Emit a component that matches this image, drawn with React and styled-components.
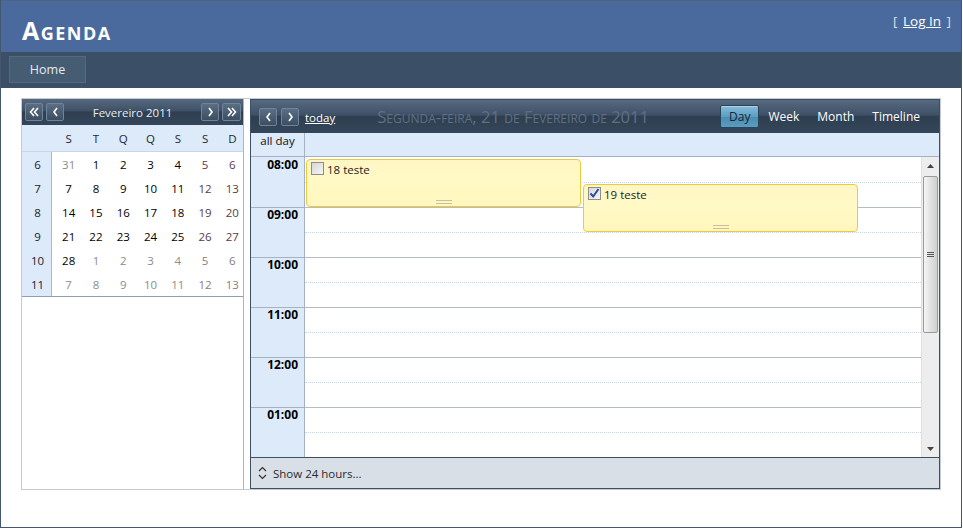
import React from "react";
import styled, { createGlobalStyle } from "styled-components";

const Global = createGlobalStyle`
  html, body { margin: 0; padding: 0; background: #fff; }
  body { font-family: "Open Sans", "Noto Sans", sans-serif; font-size: 11.5px; color: #1b1b1b; }
  * { box-sizing: border-box; }
`;

const Page = styled.div`
  width: 962px;
  height: 528px;
  border: 1px solid #42576e;
  border-top: none;
  display: flex;
  flex-direction: column;
  background: #fff;
`;

const Header = styled.header`
  height: 52px;
  background: #4a6a9d;
  border-top: 1px solid #4f6582;
  display: flex;
  justify-content: space-between;
  align-items: flex-start;
  padding: 0 10px 0 21px;
`;

const Title = styled.h1`
  margin: 14px 0 0;
  font-family: "Open Sans", sans-serif;
  font-weight: 700;
  font-size: 25px;
  letter-spacing: 1.5px;
  font-variant: small-caps;
  color: #fff;
  line-height: 30px;
`;

const Login = styled.div`
  margin-top: 11px;
  color: #d8e0ec;
  font-size: 13.5px;
  line-height: 18px;
  a { color: #fff; text-decoration: underline; margin: 0 2px; }
`;

const Nav = styled.nav`
  height: 36px;
  background: #3b5066;
  display: flex;
  align-items: flex-start;
  padding: 4px 0 0 8px;
`;

const Tab = styled.div`
  width: 77px;
  height: 27px;
  background: #465c72;
  border: 1px solid #53697f;
  color: #e4eaf0;
  font-size: 12.5px;
  display: flex;
  align-items: center;
  justify-content: center;
`;

const Main = styled.main`
  padding: 10px 0 0 20px;
`;

const Container = styled.div`
  width: 920px;
  height: 392px;
  border: 1px solid #c3cad5;
  display: flex;
  gap: 6px;
`;

const LeftPane = styled.div`
  width: 222px;
  border-right: 1px solid #a9b6c6;
`;

const darkGrad = `linear-gradient(#56697f 0%, #3f5166 45%, #2f3f51 50%, #34465a 100%)`;

const MiniCal = styled.div`
  border-bottom: 1px solid #8e9fb3;
`;

const MiniHead = styled.div`
  height: 26px;
  background: ${darkGrad};
  display: flex;
  align-items: center;
  padding: 0 2px 0 3px;
  gap: 3px;
`;

const NavBtn = styled.button`
  width: ${(p) => p.$w || 18}px;
  height: 18px;
  padding: 0;
  border: 1px solid #6f8399;
  border-radius: 2px;
  background: linear-gradient(#5a6e84, #3c4e62);
  display: flex;
  align-items: center;
  justify-content: center;
  cursor: pointer;
`;

const MiniTitle = styled.div`
  flex: 1;
  text-align: center;
  color: #e6edf4;
  font-size: 11.5px;
`;

const CalGrid = styled.div`
  display: grid;
  grid-template-columns: 30px repeat(7, 1fr);
`;

const DayName = styled.div`
  height: 27px;
  background: #dceaf9;
  border-bottom: 1px solid #c9d6e4;
  display: flex;
  align-items: center;
  justify-content: center;
  padding-left: ${(p) => (p.$corner ? 0 : 6)}px;
  font-size: 11.5px;
  color: #1e2630;
`;

const WeekNum = styled.div`
  height: 24px;
  background: #dceaf9;
  border-right: 1px solid #a9b8c9;
  display: flex;
  align-items: center;
  justify-content: center;
  padding-left: 2px;
  font-size: 11.5px;
  color: #1a2230;
`;

const DayCell = styled.div`
  height: 24px;
  display: flex;
  align-items: center;
  justify-content: center;
  padding-left: 6px;
  font-size: 11.5px;
  color: ${(p) => (p.$other ? (p.$weekend ? "#8b7a86" : "#8c8c8c") : p.$weekend ? "#5a3a4a" : "#000")};
`;

const Scheduler = styled.div`
  width: 690px;
  height: 390px;
  border: 1px solid #3d4f63;
  display: flex;
  flex-direction: column;
`;

const Toolbar = styled.div`
  height: 33px;
  background: ${darkGrad};
  display: flex;
  align-items: center;
  padding: 0 10px 0 8px;
`;

const SmallNav = styled(NavBtn)`
  margin-right: 4px;
`;

const Today = styled.a`
  color: #fff;
  text-decoration: underline;
  font-size: 11.5px;
  margin-left: 2px;
  margin-top: 1px;
`;

const DateTitle = styled.div`
  margin-left: 42px;
  font-size: 16.6px;
  font-variant: small-caps;
  color: #5f7083;
  flex: 1;
`;

const ViewBtn = styled.div`
  height: 23px;
  padding: 0 8px;
  display: flex;
  align-items: center;
  font-size: 12px;
  color: ${(p) => (p.$active ? "#142434" : "#fff")};
  border-radius: 2px;
  border: 1px solid ${(p) => (p.$active ? "#27455a" : "transparent")};
  background: ${(p) => (p.$active ? "linear-gradient(#86bcd8, #5d9ec2 50%, #4a8db3 51%, #5b9cc0)" : "transparent")};
  box-shadow: ${(p) => (p.$active ? "inset 0 1px 0 rgba(255,255,255,0.35)" : "none")};
`;

const AllDayRow = styled.div`
  height: 24px;
  background: #dceaf9;
  border-bottom: 1px solid #a3b1c1;
  display: flex;
`;

const AllDayLabel = styled.div`
  width: 54px;
  border-right: 1px solid #a3b3c4;
  text-align: center;
  font-size: 11.5px;
  line-height: 14px;
  padding-top: 1px;
  color: #111;
`;

const Body = styled.div`
  height: 300px;
  display: flex;
`;

const TimeCol = styled.div`
  width: 54px;
  background: #dceaf9;
  border-right: 1px solid #a3b3c4;
`;

const TimeCell = styled.div`
  height: 50px;
  border-top: ${(p) => (p.$first ? "none" : "1px solid #a7b2c0")};
  text-align: right;
  padding: ${(p) => (p.$first ? "1px" : "0")} 6px 0 0;
  font-weight: 700;
  font-size: 12px;
  line-height: 14px;
  color: #000;
`;

const Slots = styled.div`
  flex: 1;
  position: relative;
`;

const HourSlot = styled.div`
  height: 50px;
  border-top: ${(p) => (p.$first ? "1px solid transparent" : "1px solid #b4bcc7")};
  position: relative;
  &::after {
    content: "";
    position: absolute;
    left: 0;
    right: 0;
    top: 24px;
    border-top: 1px dotted #c6d6e8;
  }
`;

const Event = styled.div`
  position: absolute;
  width: 275px;
  height: 48px;
  border: 1px solid #eec93e;
  border-radius: 4px;
  background: linear-gradient(#fff6c4, #fff9c6 40%, #fff7bd);
  padding: 2px 4px;
  display: flex;
  align-items: flex-start;
  gap: 3px;
  font-size: 11.5px;
  color: #1c1c1c;
  line-height: 15px;
`;

const Check = styled.span`
  width: 13px;
  height: 13px;
  border: 1px solid #8d8d8d;
  background: linear-gradient(135deg, #d8d8d8, #f4f4f4);
  display: inline-flex;
  align-items: center;
  justify-content: center;
  flex: none;
`;

const Grip = styled.div`
  position: absolute;
  left: 50%;
  bottom: 2px;
  width: 16px;
  margin-left: -8px;
  height: 4px;
  border-top: 1px solid #c8c0a0;
  border-bottom: 1px solid #c8c0a0;
`;

const ScrollBar = styled.div`
  width: 18px;
  background: #ededed;
  border-left: 1px solid #e0e0e0;
  display: flex;
  flex-direction: column;
  align-items: center;
`;

const Arrow = styled.div`
  height: 17px;
  width: 100%;
  display: flex;
  align-items: center;
  justify-content: center;
`;

const Track = styled.div`
  flex: 1;
`;

const Thumb = styled.div`
  width: 15px;
  height: 157px;
  margin-top: 2px;
  border: 1px solid #9a9a9a;
  border-radius: 2px;
  background: linear-gradient(90deg, #f4f4f4, #dedede 60%, #cfcfcf);
  display: flex;
  align-items: center;
  justify-content: center;
`;

const Footer = styled.div`
  height: 31px;
  background: #d9dfe6;
  border-top: 1px solid #3e4e60;
  display: flex;
  align-items: center;
  padding-left: 7px;
  gap: 6px;
  font-size: 11.5px;
  color: #2a2a2a;
`;

const Chev = ({ dir = "left" }) => (
  <svg width="9" height="12" viewBox="0 0 9 12">
    <polyline points={dir === "left" ? "6,2 3,6 6,10" : "3,2 6,6 3,10"} fill="none" stroke="#fff" strokeWidth="1.6" />
  </svg>
);

const DoubleChev = ({ dir }) => (
  <svg width="12" height="12" viewBox="0 0 12 12">
    {dir === "left" ? (
      <>
        <polyline points="6,2 2.5,6 6,10" fill="none" stroke="#fff" strokeWidth="1.6" />
        <polyline points="10,2 6.5,6 10,10" fill="none" stroke="#fff" strokeWidth="1.6" />
      </>
    ) : (
      <>
        <polyline points="2,2 5.5,6 2,10" fill="none" stroke="#fff" strokeWidth="1.6" />
        <polyline points="6,2 9.5,6 6,10" fill="none" stroke="#fff" strokeWidth="1.6" />
      </>
    )}
  </svg>
);

const dayNames = ["S", "T", "Q", "Q", "S", "S", "D"];
const weeks = [
  { n: 6, days: [31, 1, 2, 3, 4, 5, 6], other: [true, false, false, false, false, false, false] },
  { n: 7, days: [7, 8, 9, 10, 11, 12, 13] },
  { n: 8, days: [14, 15, 16, 17, 18, 19, 20] },
  { n: 9, days: [21, 22, 23, 24, 25, 26, 27] },
  { n: 10, days: [28, 1, 2, 3, 4, 5, 6], other: [false, true, true, true, true, true, true] },
  { n: 11, days: [7, 8, 9, 10, 11, 12, 13], other: [true, true, true, true, true, true, true] },
];
const hours = ["08:00", "09:00", "10:00", "11:00", "12:00", "01:00"];

export default function App() {
  return (
    <>
      <Global />
      <Page>
        <Header>
          <Title>Agenda</Title>
          <Login>
            [ <a href="#">Log In</a> ]
          </Login>
        </Header>
        <Nav>
          <Tab>Home</Tab>
        </Nav>
        <Main>
          <Container>
            <LeftPane>
              <MiniCal>
                <MiniHead>
                  <NavBtn><DoubleChev dir="left" /></NavBtn>
                  <NavBtn><Chev dir="left" /></NavBtn>
                  <MiniTitle>Fevereiro 2011</MiniTitle>
                  <NavBtn><Chev dir="right" /></NavBtn>
                  <NavBtn $w={19}><DoubleChev dir="right" /></NavBtn>
                </MiniHead>
                <CalGrid>
                  <DayName $corner />
                  {dayNames.map((d, i) => (
                    <DayName key={i}>{d}</DayName>
                  ))}
                  {weeks.map((w) => (
                    <React.Fragment key={w.n}>
                      <WeekNum>{w.n}</WeekNum>
                      {w.days.map((d, i) => (
                        <DayCell key={i} $other={w.other ? w.other[i] : false} $weekend={i >= 5}>
                          {d}
                        </DayCell>
                      ))}
                    </React.Fragment>
                  ))}
                </CalGrid>
              </MiniCal>
            </LeftPane>
            <Scheduler>
              <Toolbar>
                <SmallNav><Chev dir="left" /></SmallNav>
                <SmallNav><Chev dir="right" /></SmallNav>
                <Today href="#">today</Today>
                <DateTitle>Segunda-feira, 21 de Fevereiro de 2011</DateTitle>
                <ViewBtn $active>Day</ViewBtn>
                <ViewBtn>Week</ViewBtn>
                <ViewBtn>Month</ViewBtn>
                <ViewBtn>Timeline</ViewBtn>
              </Toolbar>
              <AllDayRow>
                <AllDayLabel>all day</AllDayLabel>
              </AllDayRow>
              <Body>
                <TimeCol>
                  {hours.map((h, i) => (
                    <TimeCell key={h} $first={i === 0}>{h}</TimeCell>
                  ))}
                </TimeCol>
                <Slots>
                  {hours.map((h, i) => (
                    <HourSlot key={h} $first={i === 0} />
                  ))}
                  <Event style={{ left: 1, top: 2 }}>
                    <Check />
                    <span>18 teste</span>
                    <Grip />
                  </Event>
                  <Event style={{ left: 278, top: 27 }}>
                    <Check>
                      <svg width="11" height="11" viewBox="0 0 11 11">
                        <path d="M1.5 5.5 L4.2 8.5 L9.5 1" fill="none" stroke="#2a4aa0" strokeWidth="2" />
                      </svg>
                    </Check>
                    <span>19 teste</span>
                    <Grip />
                  </Event>
                </Slots>
                <ScrollBar>
                  <Arrow>
                    <svg width="7" height="4" viewBox="0 0 7 4"><path d="M0 4 L3.5 0 L7 4Z" fill="#444" /></svg>
                  </Arrow>
                  <Thumb>
                    <svg width="7" height="6" viewBox="0 0 7 6">
                      <path d="M0 0.5H7M0 2.5H7M0 4.5H7" stroke="#555" strokeWidth="1" />
                    </svg>
                  </Thumb>
                  <Track />
                  <Arrow>
                    <svg width="7" height="4" viewBox="0 0 7 4"><path d="M0 0 L3.5 4 L7 0Z" fill="#444" /></svg>
                  </Arrow>
                </ScrollBar>
              </Body>
              <Footer>
                <svg width="9" height="14" viewBox="0 0 9 14">
                  <polyline points="1,5 4.5,1.5 8,5" fill="none" stroke="#333" strokeWidth="1.2" />
                  <polyline points="1,9 4.5,12.5 8,9" fill="none" stroke="#333" strokeWidth="1.2" />
                </svg>
                <span>Show 24 hours...</span>
              </Footer>
            </Scheduler>
          </Container>
        </Main>
      </Page>
    </>
  );
}
